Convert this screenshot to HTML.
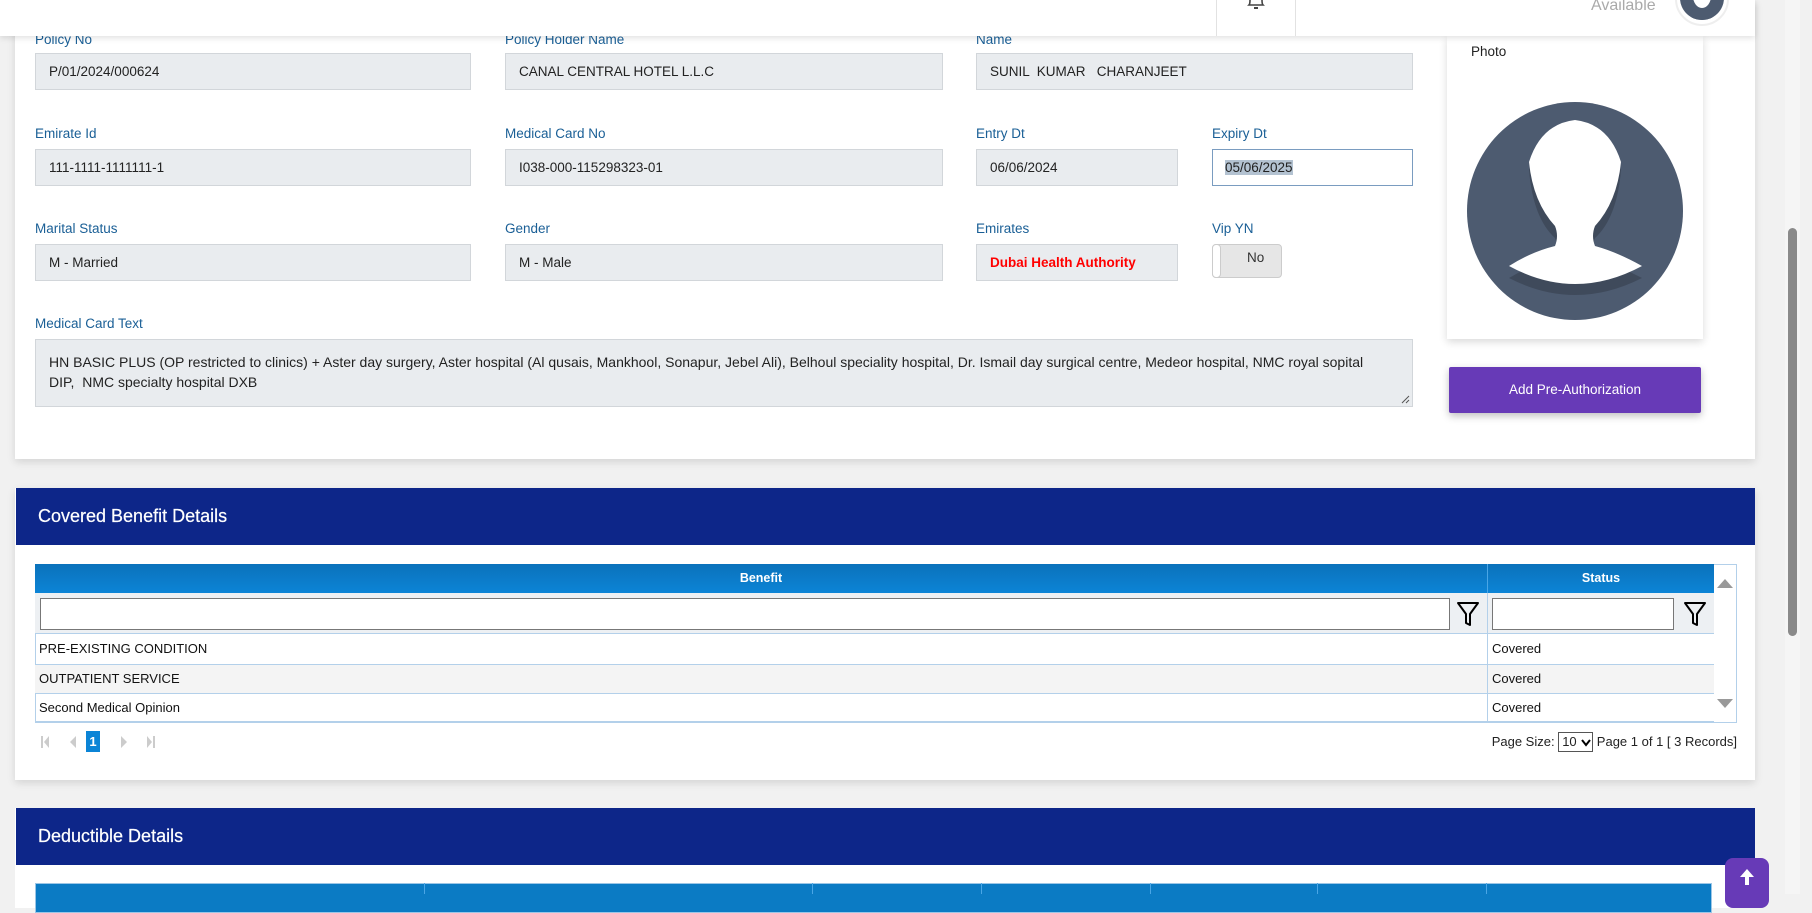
<!DOCTYPE html>
<html><head><meta charset="utf-8">
<style>
*{box-sizing:border-box;margin:0;padding:0}
body{width:1812px;height:894px;overflow:hidden;background:#f1f1f1;font-family:"Liberation Sans",sans-serif;position:relative}
.a{position:absolute}
.lbl{position:absolute;font-size:13.5px;color:#1a5f96}
.inp{position:absolute;height:37px;background:#e9ecef;border:1px solid #d2d6da;font-size:13.5px;color:#222;padding-left:13px;line-height:36px}
.hdr{position:absolute;left:16px;width:1739px;background:#0d2689;color:#fff;font-size:18px;padding-left:22px;-webkit-text-stroke:0.2px #fff}
.cell{position:absolute;font-size:13px;color:#111;padding-left:4px}
</style></head><body>
<div class="a" style="left:15px;top:0;width:1740px;height:459px;background:#fff;box-shadow:0 3px 8px rgba(0,0,0,.12)"></div>
<div class="a" style="left:0;top:0;width:1755px;height:36px;background:#fff;box-shadow:0 2px 6px rgba(0,0,0,.12);z-index:5">
 <div class="a" style="left:1216px;top:0;width:1px;height:36px;background:#e2e2e2"></div>
 <div class="a" style="left:1295px;top:0;width:1px;height:36px;background:#e2e2e2"></div>
 <svg class="a" style="left:1246px;top:0" width="20" height="12"><path d="M4 0 Q4 4 3 5 L17 5 Q16 4 16 0" fill="none" stroke="#444" stroke-width="1.6"/><path d="M8 8 L12 8" stroke="#444" stroke-width="2"/></svg>
 <div class="a" style="left:1591px;top:-3px;font-size:16px;color:#aaa">Available</div>
 <div class="a" style="left:1675px;top:-28px;width:54px;height:54px;border-radius:50%;border:2px solid #eee;background:#fff"></div>
 <div class="a" style="left:1680px;top:-24px;width:44px;height:44px;border-radius:50%;background:#4d5b70;overflow:hidden"><div class="a" style="left:13px;top:8px;width:18px;height:24px;border-radius:50%;background:#fff"></div><div class="a" style="left:10px;top:32px;width:24px;height:14px;border-radius:50%;background:#4d5b70"></div></div>
</div>
<div class="a" style="left:1785px;top:0;width:15px;height:894px;background:#f5f5f5"></div>
<div class="a" style="left:1788px;top:228px;width:9px;height:408px;border-radius:5px;background:#8a8a8a"></div>

<div class="lbl" style="left:35px;top:32px">Policy No</div>
<div class="inp" style="left:35px;top:53px;width:436px">P/01/2024/000624</div>
<div class="lbl" style="left:505px;top:32px">Policy Holder Name</div>
<div class="inp" style="left:505px;top:53px;width:438px">CANAL CENTRAL HOTEL L.L.C</div>
<div class="lbl" style="left:976px;top:32px">Name</div>
<div class="inp" style="left:976px;top:53px;width:437px;white-space:pre">SUNIL  KUMAR   CHARANJEET</div>
<div class="lbl" style="left:35px;top:126px">Emirate Id</div>
<div class="inp" style="left:35px;top:149px;width:436px">111-1111-1111111-1</div>
<div class="lbl" style="left:505px;top:126px">Medical Card No</div>
<div class="inp" style="left:505px;top:149px;width:438px">I038-000-115298323-01</div>
<div class="lbl" style="left:976px;top:126px">Entry Dt</div>
<div class="inp" style="left:976px;top:149px;width:202px">06/06/2024</div>
<div class="lbl" style="left:1212px;top:126px">Expiry Dt</div>
<div class="inp" style="left:1212px;top:149px;width:201px;background:#fff;border-color:#7a9cc0;padding-left:12px"><span style="background:#b3c2d1">05/06/2025</span></div>
<div class="lbl" style="left:35px;top:221px">Marital Status</div>
<div class="inp" style="left:35px;top:244px;width:436px">M - Married</div>
<div class="lbl" style="left:505px;top:221px">Gender</div>
<div class="inp" style="left:505px;top:244px;width:438px">M - Male</div>
<div class="lbl" style="left:976px;top:221px">Emirates</div>
<div class="inp" style="left:976px;top:244px;width:202px;color:#f00;font-weight:bold">Dubai Health Authority</div>
<div class="lbl" style="left:1212px;top:221px">Vip YN</div>
<div class="a" style="left:1212px;top:244px;width:70px;height:34px;border:1px solid #ccc;border-radius:4px;background:#e6e6e6;font-size:13.5px;color:#333;padding-left:34px;line-height:26px">No<div class="a" style="left:-1px;top:-1px;width:9px;height:34px;background:#fff;border:1px solid #ccc;border-radius:4px"></div></div>
<div class="lbl" style="left:35px;top:316px">Medical Card Text</div>
<div class="inp" style="left:35px;top:339px;width:1378px;height:68px;line-height:20px;padding-top:12px;font-size:14px">HN BASIC PLUS (OP restricted to clinics) + Aster day surgery, Aster hospital (Al qusais, Mankhool, Sonapur, Jebel Ali), Belhoul speciality hospital, Dr. Ismail day surgical centre, Medeor hospital, NMC royal sopital<br>DIP,&nbsp; NMC specialty hospital DXB
<svg class="a" style="right:2px;bottom:2px" width="10" height="10"><path d="M2 9 L9 2 M6 9 L9 6" stroke="#555" stroke-width="1"/></svg></div>

<div class="a" style="left:1447px;top:36px;width:256px;height:303px;background:#fff;box-shadow:0 3px 8px rgba(0,0,0,.15)"></div>
<div class="a" style="left:1471px;top:44px;font-size:13.5px;color:#222">Photo</div>
<svg class="a" style="left:1467px;top:102px" width="216" height="218" viewBox="0 0 216 218">
<ellipse cx="108" cy="109" rx="108" ry="109" fill="#4d5b70"/>
<path d="M42 170 Q108 204 175 170 Q150 157 128 150 Q124 140 128 130 Q150 110 154 62 Q142 22 108 18 Q74 22 62 62 Q66 110 88 130 Q92 140 88 150 Q64 157 42 170Z" fill="#3f4a5b" transform="translate(0,6)"/>
<path d="M42 164 Q108 200 175 164 Q150 150 128 144 Q124 134 128 124 Q150 100 154 60 Q142 22 108 18 Q74 22 62 60 Q66 100 88 124 Q92 134 88 144 Q64 150 42 164Z" fill="#fff"/>
</svg>
<div class="a" style="left:1449px;top:367px;width:252px;height:46px;background:#673ab7;color:#fff;font-size:13.5px;text-align:center;line-height:46px;border-radius:2px;box-shadow:0 3px 8px rgba(0,0,0,.25)">Add Pre-Authorization</div>

<div class="a" style="left:15px;top:488px;width:1740px;height:292px;background:#fff;box-shadow:0 3px 8px rgba(0,0,0,.12)"></div>
<div class="hdr" style="top:488px;height:57px;line-height:56px">Covered Benefit Details</div>
<div class="a" style="left:35px;top:564px;width:1702px;height:159px;border:1px solid #b3d0ea;background:#fff"></div>
<div class="a" style="left:35px;top:564px;width:1679px;height:29px;background:linear-gradient(#0b72bb,#0c84d6);color:#fff;font-size:12.5px;font-weight:bold">
 <div class="a" style="left:0;width:1452px;text-align:center;line-height:29px">Benefit</div>
 <div class="a" style="left:1452px;top:0;width:1px;height:29px;background:#4aa6e6"></div>
 <div class="a" style="left:1453px;width:226px;text-align:center;line-height:29px">Status</div>
</div>
<div class="a" style="left:35px;top:593px;width:1679px;height:41px;background:#edf0f3;border-bottom:1px solid #b3d0ea"></div>
<div class="a" style="left:40px;top:598px;width:1410px;height:32px;background:#fff;border:1px solid #777"></div>
<svg class="a" style="left:1456px;top:601px" width="24" height="26"><path d="M2 2 L22 2 L14 13 L14 24 L10 22 L10 13 Z" fill="none" stroke="#000" stroke-width="2" stroke-linejoin="round"/></svg>
<div class="a" style="left:1492px;top:598px;width:182px;height:32px;background:#fff;border:1px solid #777"></div>
<svg class="a" style="left:1683px;top:601px" width="24" height="26"><path d="M2 2 L22 2 L14 13 L14 24 L10 22 L10 13 Z" fill="none" stroke="#000" stroke-width="2" stroke-linejoin="round"/></svg>
<div class="a" style="left:35px;top:664px;width:1679px;height:29px;background:#f4f4f4"></div>
<div class="a" style="left:35px;top:664px;width:1679px;height:1px;background:#b3d0ea"></div>
<div class="a" style="left:35px;top:693px;width:1679px;height:1px;background:#b3d0ea"></div>
<div class="a" style="left:35px;top:721px;width:1679px;height:2px;background:#b3d0ea"></div>
<div class="a" style="left:1487px;top:593px;width:1px;height:129px;background:#b3d0ea"></div>
<div class="cell" style="left:35px;top:641px">PRE-EXISTING CONDITION</div>
<div class="cell" style="left:35px;top:671px">OUTPATIENT SERVICE</div>
<div class="cell" style="left:35px;top:700px">Second Medical Opinion</div>
<div class="cell" style="left:1488px;top:641px">Covered</div>
<div class="cell" style="left:1488px;top:671px">Covered</div>
<div class="cell" style="left:1488px;top:700px">Covered</div>
<svg class="a" style="left:1716px;top:575px" width="18" height="140"><path d="M1 13 L17 13 L9 4Z M1 124 L17 124 L9 133Z" fill="#999"/></svg>
<svg class="a" style="left:40px;top:731px" width="120" height="22"><path d="M1 5 h2 v12 h-2z M9 5 L4 11 L9 17Z M36 5 L30 11 L36 17Z" fill="#ccc"/><path d="M81 5 L87 11 L81 17Z M107 5 L112 11 L107 17Z M113 5 h2 v12 h-2z" fill="#ccc"/></svg>
<div class="a" style="left:86px;top:731px;width:14px;height:21px;background:#0b84d6;color:#fff;font-size:13px;font-weight:bold;text-align:center;line-height:21px">1</div>
<div class="a" style="right:75px;top:731px;height:21px;display:flex;align-items:center;font-size:13px;color:#222;white-space:nowrap">
 <span>Page Size:&nbsp;</span>
 <span style="position:relative;display:inline-block;width:35px;height:20px;border:1px solid #555;background:#fff;padding-left:3px;line-height:18px">10<svg class="a" style="left:22px;top:6px" width="10" height="8"><path d="M1 1 L5 6 L9 1" fill="none" stroke="#000" stroke-width="2"/></svg></span>
 <span>&nbsp;Page 1 of 1 [ 3 Records]</span>
</div>

<div class="a" style="left:15px;top:808px;width:1740px;height:100px;background:#fff"></div>
<div class="hdr" style="top:808px;height:57px;line-height:56px">Deductible Details</div>
<div class="a" style="left:35px;top:883px;width:1677px;height:30px;background:#0b7bc4;border:1px solid #9cc6e6"></div>
<div class="a" style="left:424px;top:883px;width:1px;height:11px;background:#4aa6e6"></div>
<div class="a" style="left:812px;top:883px;width:1px;height:11px;background:#4aa6e6"></div>
<div class="a" style="left:981px;top:883px;width:1px;height:11px;background:#4aa6e6"></div>
<div class="a" style="left:1150px;top:883px;width:1px;height:11px;background:#4aa6e6"></div>
<div class="a" style="left:1317px;top:883px;width:1px;height:11px;background:#4aa6e6"></div>
<div class="a" style="left:1486px;top:883px;width:1px;height:11px;background:#4aa6e6"></div>
<div class="a" style="left:1725px;top:858px;width:44px;height:50px;background:#673ab7;border-radius:8px"></div>
<svg class="a" style="left:1737px;top:867px" width="20" height="20"><path d="M10 2 L3 10 H8 V18 H12 V10 H17Z" fill="#fff"/></svg>
</body></html>
